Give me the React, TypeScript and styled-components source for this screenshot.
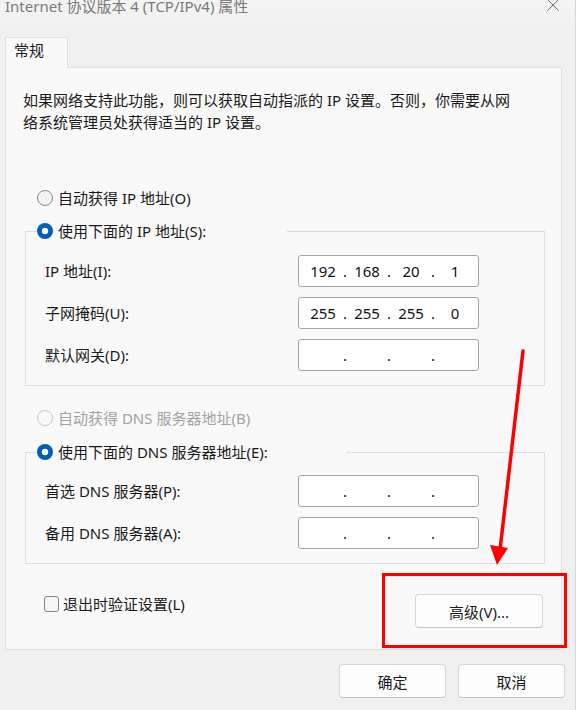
import React from "react";
import styled, { createGlobalStyle } from "styled-components";

const GlobalStyle = createGlobalStyle`
  html, body { margin: 0; padding: 0; background: #f0f0f0; }
  body {
    font-family: "Noto Sans", "Noto Sans CJK SC", sans-serif;
    font-size: 15px;
    color: #1a1a1a;
  }
  * { box-sizing: border-box; }
`;

const Window = styled.div`
  position: relative;
  width: 576px;
  height: 710px;
  overflow: hidden;
  background: #f0f0f0;
  border-right: 1px solid #d6d6d6;
  display: flex;
  flex-direction: column;
`;

const TitleBar = styled.div`
  height: 37px;
  flex: none;
  display: flex;
  justify-content: space-between;
  align-items: flex-start;
  padding: 0 16px 0 5px;
  background: linear-gradient(#f4f4f4, #efefef);
`;

const Title = styled.div`
  margin-top: -4px;
  line-height: 20px;
  font-size: 15px;
  color: #7a7a7a;
  white-space: nowrap;
`;

const CloseIcon = styled.svg`
  margin-top: -1px;
  width: 12px;
  height: 12px;
`;

const TabStrip = styled.div`
  display: flex;
  padding-left: 5px;
  position: relative;
  z-index: 1;
  margin-bottom: -1px;
`;

const Tab = styled.div`
  width: 63px;
  height: 31px;
  padding: 2px 0 0 8px;
  line-height: 20px;
  background: #f9f9f9;
  border: 1px solid #e0e0e0;
  border-bottom: none;
`;

const Panel = styled.div`
  margin-left: 5px;
  width: 557px;
  height: 583px;
  background: #f9f9f9;
  border: 1px solid #e0e0e0;
  padding: 21px 0 0 17px;
  display: flex;
  flex-direction: column;
  align-items: flex-start;
`;

const Description = styled.p`
  margin: 0;
  line-height: 22px;
  white-space: nowrap;
`;

const Option = styled.div<{ $mt?: number; $ml?: number; $gap?: number; $disabled?: boolean }>`
  display: flex;
  align-items: center;
  gap: ${(p) => p.$gap ?? 5}px;
  height: 22px;
  line-height: 22px;
  margin: ${(p) => p.$mt ?? 0}px 0 0 ${(p) => p.$ml ?? 0}px;
  color: ${(p) => (p.$disabled ? "#a3a3a3" : "#1a1a1a")};
  white-space: nowrap;
`;

const RadioMark = styled.span<{ $checked?: boolean; $disabled?: boolean }>`
  flex: none;
  width: 16px;
  height: 16px;
  border-radius: 50%;
  border: ${(p) =>
    p.$checked ? "none" : `1px solid ${p.$disabled ? "#c8c8c8" : "#8a8a8a"}`};
  background: ${(p) =>
    p.$checked
      ? "radial-gradient(circle, #ffffff 0 3px, #005fb8 3.6px)"
      : p.$disabled
      ? "#f9f9f9"
      : "#f3f3f3"};
`;

const CheckMark = styled.span`
  flex: none;
  width: 15px;
  height: 16px;
  border-radius: 3px;
  border: 1px solid #858585;
  background: #f6f6f6;
`;

const GroupBox = styled.fieldset<{ $mt: number }>`
  margin: ${(p) => p.$mt}px 0 0 2px;
  width: 520px;
  min-width: 0;
  border: 1px solid #dedede;
  padding: 0;
`;

const Legend = styled.legend<{ $w: number }>`
  width: ${(p) => p.$w}px;
  margin-left: 11px;
  padding: 0;
`;

const FieldGrid = styled.div<{ $pt: number }>`
  display: grid;
  grid-template-columns: 253px 181px;
  row-gap: 10px;
  align-items: center;
  padding: ${(p) => p.$pt}px 0 14px 19px;
`;

const FieldLabel = styled.div`
  line-height: 22px;
  white-space: nowrap;
`;

const IpBox = styled.div`
  display: flex;
  align-items: center;
  width: 181px;
  height: 32px;
  background: #ffffff;
  border: 1px solid #a5a5a5;
  border-radius: 3px;
  padding-left: 6px;
  font-size: 15px;
  color: #111;
`;

const Segment = styled.span`
  width: 36px;
  text-align: center;
`;

const Dot = styled.span`
  width: 8px;
  text-align: center;
`;

const BottomRow = styled.div`
  display: flex;
  justify-content: space-between;
  align-items: flex-start;
  width: 499px;
  margin: 30px 0 0 21px;
`;

const Button = styled.button<{ $w: number }>`
  width: ${(p) => p.$w}px;
  height: 34px;
  padding: 0;
  background: #fdfdfd;
  border: 1px solid #d6d6d6;
  border-bottom-color: #c4c4c4;
  border-radius: 4px;
  font-family: inherit;
  font-size: 15px;
  color: #1a1a1a;
`;

const Footer = styled.div`
  display: flex;
  justify-content: flex-end;
  gap: 12px;
  padding-right: 10px;
  margin-top: 14px;
`;

const RedBox = styled.div`
  position: absolute;
  left: 382px;
  top: 573px;
  width: 185px;
  height: 75px;
  border: 3px solid #ff0000;
  pointer-events: none;
`;

const ArrowLayer = styled.svg`
  position: absolute;
  left: 0;
  top: 0;
  width: 576px;
  height: 710px;
  pointer-events: none;
`;

const IpField: React.FC<{ parts?: string[] }> = ({ parts = ["", "", "", ""] }) => (
  <IpBox>
    <Segment>{parts[0]}</Segment>
    <Dot>.</Dot>
    <Segment>{parts[1]}</Segment>
    <Dot>.</Dot>
    <Segment>{parts[2]}</Segment>
    <Dot>.</Dot>
    <Segment>{parts[3]}</Segment>
  </IpBox>
);

export default function App() {
  return (
    <>
      <GlobalStyle />
      <Window>
        <TitleBar>
          <Title>Internet 协议版本 4 (TCP/IPv4) 属性</Title>
          <CloseIcon viewBox="0 0 12 12">
            <path d="M0.5 0.5 L11.5 11.5 M11.5 0.5 L0.5 11.5" stroke="#707070" strokeWidth="1" fill="none" />
          </CloseIcon>
        </TitleBar>
        <TabStrip>
          <Tab>常规</Tab>
        </TabStrip>
        <Panel>
          <Description>
            如果网络支持此功能，则可以获取自动指派的 IP 设置。否则，你需要从网
            <br />
            络系统管理员处获得适当的 IP 设置。
          </Description>

          <Option $mt={54} $ml={14}>
            <RadioMark />
            自动获得 IP 地址(O)
          </Option>

          <GroupBox $mt={11}>
            <Legend $w={250}>
              <Option>
                <RadioMark $checked />
                使用下面的 IP 地址(S):
              </Option>
            </Legend>
            <FieldGrid $pt={13}>
              <FieldLabel>IP 地址(I):</FieldLabel>
              <IpField parts={["192", "168", "20", "1"]} />
              <FieldLabel>子网掩码(U):</FieldLabel>
              <IpField parts={["255", "255", "255", "0"]} />
              <FieldLabel>默认网关(D):</FieldLabel>
              <IpField />
            </FieldGrid>
          </GroupBox>

          <Option $mt={21} $ml={14} $disabled>
            <RadioMark $disabled />
            自动获得 DNS 服务器地址(B)
          </Option>

          <GroupBox $mt={12}>
            <Legend $w={309}>
              <Option>
                <RadioMark $checked />
                使用下面的 DNS 服务器地址(E):
              </Option>
            </Legend>
            <FieldGrid $pt={12}>
              <FieldLabel>首选 DNS 服务器(P):</FieldLabel>
              <IpField />
              <FieldLabel>备用 DNS 服务器(A):</FieldLabel>
              <IpField />
            </FieldGrid>
          </GroupBox>

          <BottomRow>
            <Option $mt={-1} $gap={4}>
              <CheckMark />
              退出时验证设置(L)
            </Option>
            <Button $w={128}>高级(V)...</Button>
          </BottomRow>
        </Panel>
        <Footer>
          <Button $w={107}>确定</Button>
          <Button $w={107}>取消</Button>
        </Footer>

        <RedBox />
        <ArrowLayer viewBox="0 0 576 710">
          <line x1="523" y1="351" x2="500" y2="550" stroke="#ff0000" strokeWidth="3.5" strokeLinecap="round" />
          <polygon points="490,545 508,548 497,565" fill="#ff0000" />
        </ArrowLayer>
      </Window>
    </>
  );
}
